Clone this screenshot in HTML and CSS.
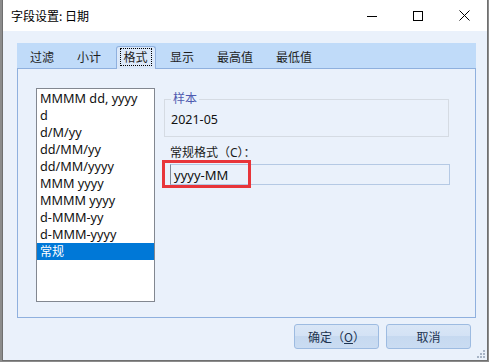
FILE: index.html
```html
<!DOCTYPE html>
<html lang="zh">
<head>
<meta charset="utf-8">
<link rel="stylesheet" href="styles.css">
</head>
<body>
<div class="window">
  <div class="titlebar">
    <span class="title">字段设置: 日期</span>
    <span class="cap"><svg width="10" height="10" viewBox="0 0 10 10"><path d="M0 5.5H10" stroke="#000" stroke-width="1"/></svg></span>
    <span class="cap"><svg width="10" height="10" viewBox="0 0 10 10"><rect x="0.5" y="0.5" width="9" height="9" fill="none" stroke="#000" stroke-width="1"/></svg></span>
    <span class="cap"><svg width="11" height="11" viewBox="0 0 11 11"><path d="M0.5 0.5L10.5 10.5M10.5 0.5L0.5 10.5" stroke="#000" stroke-width="1"/></svg></span>
  </div>
  <div class="body">
    <div class="tabs">
      <span class="tab">过滤</span>
      <span class="tab">小计</span>
      <span class="tab active"><span class="focus">格式</span></span>
      <span class="tab">显示</span>
      <span class="tab">最高值</span>
      <span class="tab">最低值</span>
    </div>
    <div class="panel">
      <ul class="list">
        <li>MMMM dd, yyyy</li>
        <li>d</li>
        <li>d/M/yy</li>
        <li>dd/MM/yy</li>
        <li>dd/MM/yyyy</li>
        <li>MMM yyyy</li>
        <li>MMMM yyyy</li>
        <li>d-MMM-yy</li>
        <li>d-MMM-yyyy</li>
        <li class="sel">常规</li>
      </ul>
      <div class="right">
        <fieldset class="sample">
          <legend>样本</legend>
          <div class="sample-val">2021-05</div>
        </fieldset>
        <div class="fmt">
          <div class="fmt-label">常规格式（C）：</div>
          <div class="fmt-input">yyyy-MM</div>
          <div class="redbox"></div>
        </div>
      </div>
    </div>
    <div class="buttons">
      <button class="btn">确定（<u>O</u>）</button>
      <button class="btn">取消</button>
    </div>
  </div>
  <svg class="grip" width="9" height="9" viewBox="0 0 9 9">
    <g fill="#a7b4c6">
      <rect x="6" y="0" width="2" height="2"/>
      <rect x="3" y="3" width="2" height="2"/>
      <rect x="6" y="3" width="2" height="2"/>
      <rect x="0" y="6" width="2" height="2"/>
      <rect x="3" y="6" width="2" height="2"/>
      <rect x="6" y="6" width="2" height="2"/>
    </g>
  </svg>
</div>
</body>
</html>
```
FILE: styles.css
```css
html {
  background: #8c8c8c;
}
body {
  margin: 0;
}
.window {
  position: relative;
  margin-left: 2px;
  width: 484px;
  height: 360px;
  border: 1px solid #6f6f6f;
  border-top: none;
  background: #eaf1fb;
  font-family: "Noto Sans", "Noto Sans CJK SC", sans-serif;
  font-size: 12px;
  color: #1a1a1a;
}
.titlebar {
  height: 31px;
  background: #fff;
  display: flex;
  align-items: center;
}
.title {
  flex: 1;
  padding-left: 8px;
  line-height: 16px;
  font-family: "Noto Sans CJK SC", sans-serif;
  color: #000;
}
.cap {
  width: 46px;
  height: 31px;
  display: flex;
  align-items: center;
  justify-content: center;
}
.cap svg {
  display: block;
}
.body {
  padding: 12px 11px 0 14px;
}
.tabs {
  height: 25px;
  box-sizing: border-box;
  background: #c0dbf9;
  display: flex;
  align-items: flex-end;
  padding-left: 1.5px;
}
.tab {
  height: 22px;
  line-height: 22px;
  padding: 0 11.5px;
  font-family: "Noto Sans CJK SC", sans-serif;
  color: #1e1e1e;
}
.tab.active {
  position: relative;
  height: 23px;
  box-sizing: border-box;
  margin: 0 3px -1px;
  padding: 1px 3px 0;
  border: 1px solid #8fb0de;
  border-bottom: none;
  border-radius: 3px 3px 0 0;
  background: #dbe8f9;
  line-height: 16px;
}
.focus {
  display: inline-block;
  padding: 0 3px;
  border: 1px dotted #000;
  line-height: 16px;
}
.panel {
  height: 250px;
  box-sizing: border-box;
  border: 1px solid #8fb0de;
  display: flex;
  align-items: flex-start;
  padding: 19px 0 0 18px;
}
.list {
  margin: 0;
  padding: 1px 0 0;
  list-style: none;
  width: 119px;
  height: 214px;
  box-sizing: border-box;
  border: 1px solid #828790;
  background: #fff;
  font-size: 12.7px;
}
.list li {
  line-height: 17px;
  height: 17px;
  padding-left: 3px;
  white-space: nowrap;
  color: #111;
}
.list li.sel {
  background: #0078d7;
  color: #fff;
  font-size: 12px;
}
.right {
  margin-left: 9px;
  width: 285px;
}
.sample {
  margin: 3px 0 0;
  padding: 5px 6px 8px;
  border: 1px solid #d5dbe3;
  min-width: 0;
}
.sample legend {
  padding: 0 2px;
  line-height: 16px;
  color: #4f5ab0;
}
.sample-val {
  line-height: 16px;
  font-size: 12.5px;
  color: #111;
}
.fmt {
  position: relative;
  margin-top: 8px;
}
.fmt-label {
  margin-left: 6px;
  line-height: 16px;
}
.fmt-input {
  margin: 3px 0 0 6px;
  width: 280px;
  height: 21px;
  box-sizing: border-box;
  border: 1px solid #b5c9e4;
  border-left-color: #7e8a99;
  padding: 2px 3px 1px;
  line-height: 16px;
  font-size: 13px;
  color: #111;
}
.redbox {
  position: absolute;
  left: -2px;
  top: 15px;
  width: 89px;
  height: 28px;
  box-sizing: border-box;
  border: 3px solid #e8353a;
}
.buttons {
  display: flex;
  justify-content: flex-end;
  gap: 7px;
  margin-top: 6px;
  padding-right: 5px;
}
.btn {
  width: 85px;
  height: 25px;
  border: 1px solid #9dbbe1;
  border-radius: 3px;
  background: linear-gradient(#d9e6f6 0%, #d3e2f5 50%, #c6d9f0 50%, #cadcf2 100%);
  font-family: "Noto Sans CJK SC", sans-serif;
  font-size: 12px;
  color: #1d3350;
  padding: 0;
  line-height: 16px;
}
.grip {
  position: absolute;
  right: 1px;
  bottom: 1px;
}
```
